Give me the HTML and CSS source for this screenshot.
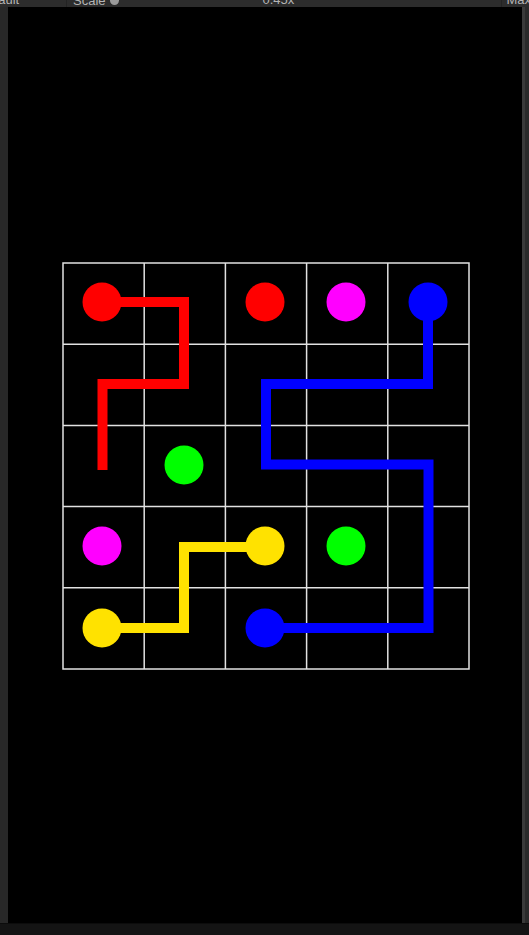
FILE: index.html
```html
<!DOCTYPE html>
<html>
<head>
<meta charset="utf-8">
<link rel="stylesheet" href="styles.css">
</head>
<body>
<div class="app">
  <div class="toolbar">
    <div class="tb-item tb-first">Default</div>
    <div class="tb-sep"></div>
    <div class="tb-item tb-scale">Scale <span class="knob"></span></div>
    <div class="tb-item tb-value">0.45x</div>
    <div class="tb-sep tb-sep-right"></div>
    <div class="tb-item tb-last">Maximize</div>
  </div>
  <div class="main">
    <div class="strip-left"></div>
    <div class="view">
      <svg class="board" viewBox="8 7 514 916" width="514" height="916" xmlns="http://www.w3.org/2000/svg">
        <g stroke="#e2e2e2" stroke-width="1.5" fill="none">
          <rect x="63" y="263" width="406" height="406"/>
          <line x1="144.2" y1="263" x2="144.2" y2="669"/>
          <line x1="225.4" y1="263" x2="225.4" y2="669"/>
          <line x1="306.6" y1="263" x2="306.6" y2="669"/>
          <line x1="387.8" y1="263" x2="387.8" y2="669"/>
          <line x1="63" y1="344.2" x2="469" y2="344.2"/>
          <line x1="63" y1="425.4" x2="469" y2="425.4"/>
          <line x1="63" y1="506.6" x2="469" y2="506.6"/>
          <line x1="63" y1="587.8" x2="469" y2="587.8"/>
        </g>
        <g fill="none" stroke-width="10" stroke-linejoin="miter">
          <polyline stroke="#ff0000" stroke-linecap="square" points="102,302 184,302 184,384 102.5,384 102.5,465"/>
          <polyline stroke="#0000ff" points="428,302 428,384 266,384 266,464.5 428.5,464.5 428.5,628 265,628"/>
          <polyline stroke="#ffe200" points="102,628 184,628 184,547 265,547"/>
        </g>
        <g>
          <circle cx="102" cy="302" r="19.5" fill="#ff0000"/>
          <circle cx="265" cy="302" r="19.5" fill="#ff0000"/>
          <circle cx="346" cy="302" r="19.5" fill="#ff00ff"/>
          <circle cx="428" cy="302" r="19.5" fill="#0000ff"/>
          <circle cx="184" cy="465" r="19.5" fill="#00ff00"/>
          <circle cx="102" cy="546" r="19.5" fill="#ff00ff"/>
          <circle cx="265" cy="546" r="19.5" fill="#ffe200"/>
          <circle cx="346" cy="546" r="19.5" fill="#00ff00"/>
          <circle cx="102" cy="628" r="19.5" fill="#ffe200"/>
          <circle cx="265" cy="628" r="19.5" fill="#0000ff"/>
        </g>
      </svg>
    </div>
    <div class="strip-right"></div>
  </div>
  <div class="bottombar"></div>
</div>
</body>
</html>
```
FILE: styles.css
```css
html, body {
  margin: 0;
  padding: 0;
  background: #000;
}
.app {
  width: 529px;
  height: 935px;
  display: flex;
  flex-direction: column;
  overflow: hidden;
  font-family: "Liberation Sans", Arial, sans-serif;
}
.toolbar {
  height: 7px;
  flex: 0 0 7px;
  background: #2c2c2c;
  display: flex;
  overflow: hidden;
  color: #b4b4b4;
  font-size: 13px;
  line-height: 12px;
  white-space: nowrap;
}
.tb-item {
  margin-top: -6px;
}
.tb-first {
  margin-left: -22px;
  width: 88px;
  flex: 0 0 88px;
}
.tb-sep {
  width: 1px;
  flex: 0 0 1px;
  background: #232323;
}
.tb-scale {
  margin-left: 6px;
  display: flex;
  align-items: center;
  gap: 4px;
}
.knob {
  display: inline-block;
  width: 9px;
  height: 9px;
  border-radius: 50%;
  background: #9a9a9a;
}
.tb-value {
  margin-left: 144px;
  width: 238px;
  flex: 0 0 238px;
}
.tb-last {
  margin-left: 5px;
}
.main {
  flex: 1 1 auto;
  display: flex;
  min-height: 0;
}
.strip-left {
  width: 8px;
  flex: 0 0 8px;
  background: #282828;
}
.view {
  flex: 1 1 auto;
  background: #000;
  overflow: hidden;
}
.board {
  display: block;
}
.strip-right {
  width: 7px;
  flex: 0 0 7px;
  background: #2a2a2a;
  border-left: 3px solid #3a3a3a;
  box-sizing: border-box;
}
.bottombar {
  height: 12px;
  flex: 0 0 12px;
  background: #141414;
  border-top: 1px solid #0c0c0c;
  box-sizing: border-box;
}
```
